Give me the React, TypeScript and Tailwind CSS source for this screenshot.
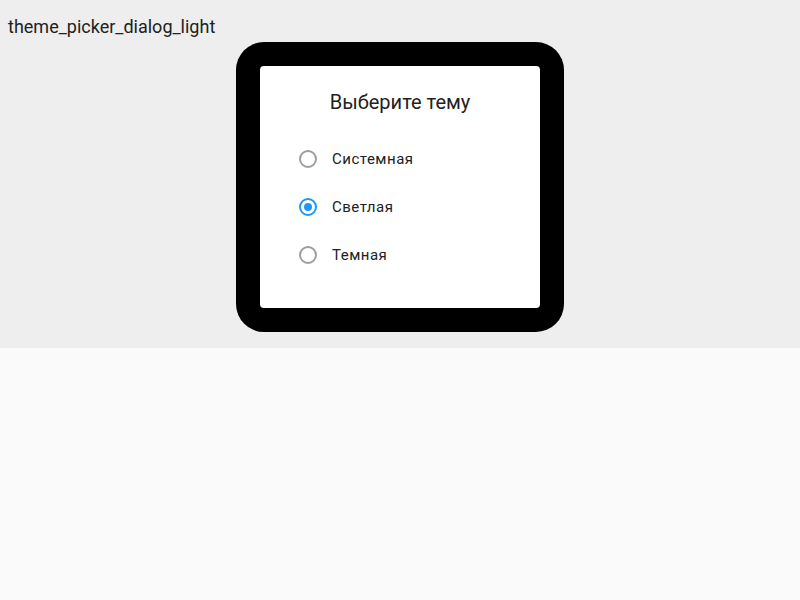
const OPTIONS = [
  { label: "Системная", checked: false },
  { label: "Светлая", checked: true },
  { label: "Темная", checked: false },
];

function Radio({ checked }: { checked: boolean }) {
  return (
    <span
      className={
        checked
          ? "w-[18px] h-[18px] rounded-full border-2 border-[#2196f3] flex items-center justify-center"
          : "w-[18px] h-[18px] rounded-full border-2 border-[#9e9e9e] flex items-center justify-center"
      }
    >
      {checked && <span className="w-[8px] h-[8px] rounded-full bg-[#2196f3]" />}
    </span>
  );
}

export default function App() {
  return (
    <div className="w-[800px] h-[600px] bg-[#fafafa] font-['Roboto',sans-serif]">
      <div className="relative h-[348px] bg-[#eeeeee] flex justify-center pt-[42px]">
        <p className="absolute left-2 top-[16px] text-[18px] leading-[22px] text-[#212121]">
          theme_picker_dialog_light
        </p>
        <div className="w-[328px] h-[290px] bg-black rounded-[28px] p-6">
          <div className="h-full bg-white rounded-[4px] pt-[24px]">
            <h2 className="text-center text-[20px] leading-[24px] text-[#212121]">Выберите тему</h2>
            <ul className="mt-[21px]">
              {OPTIONS.map(({ label, checked }) => (
                <li key={label} className="h-12 flex items-center pl-[39px] gap-[15px]">
                  <Radio checked={checked} />
                  <span className="text-[15px] tracking-[0.5px] text-[#212121]">{label}</span>
                </li>
              ))}
            </ul>
          </div>
        </div>
      </div>
    </div>
  );
}
